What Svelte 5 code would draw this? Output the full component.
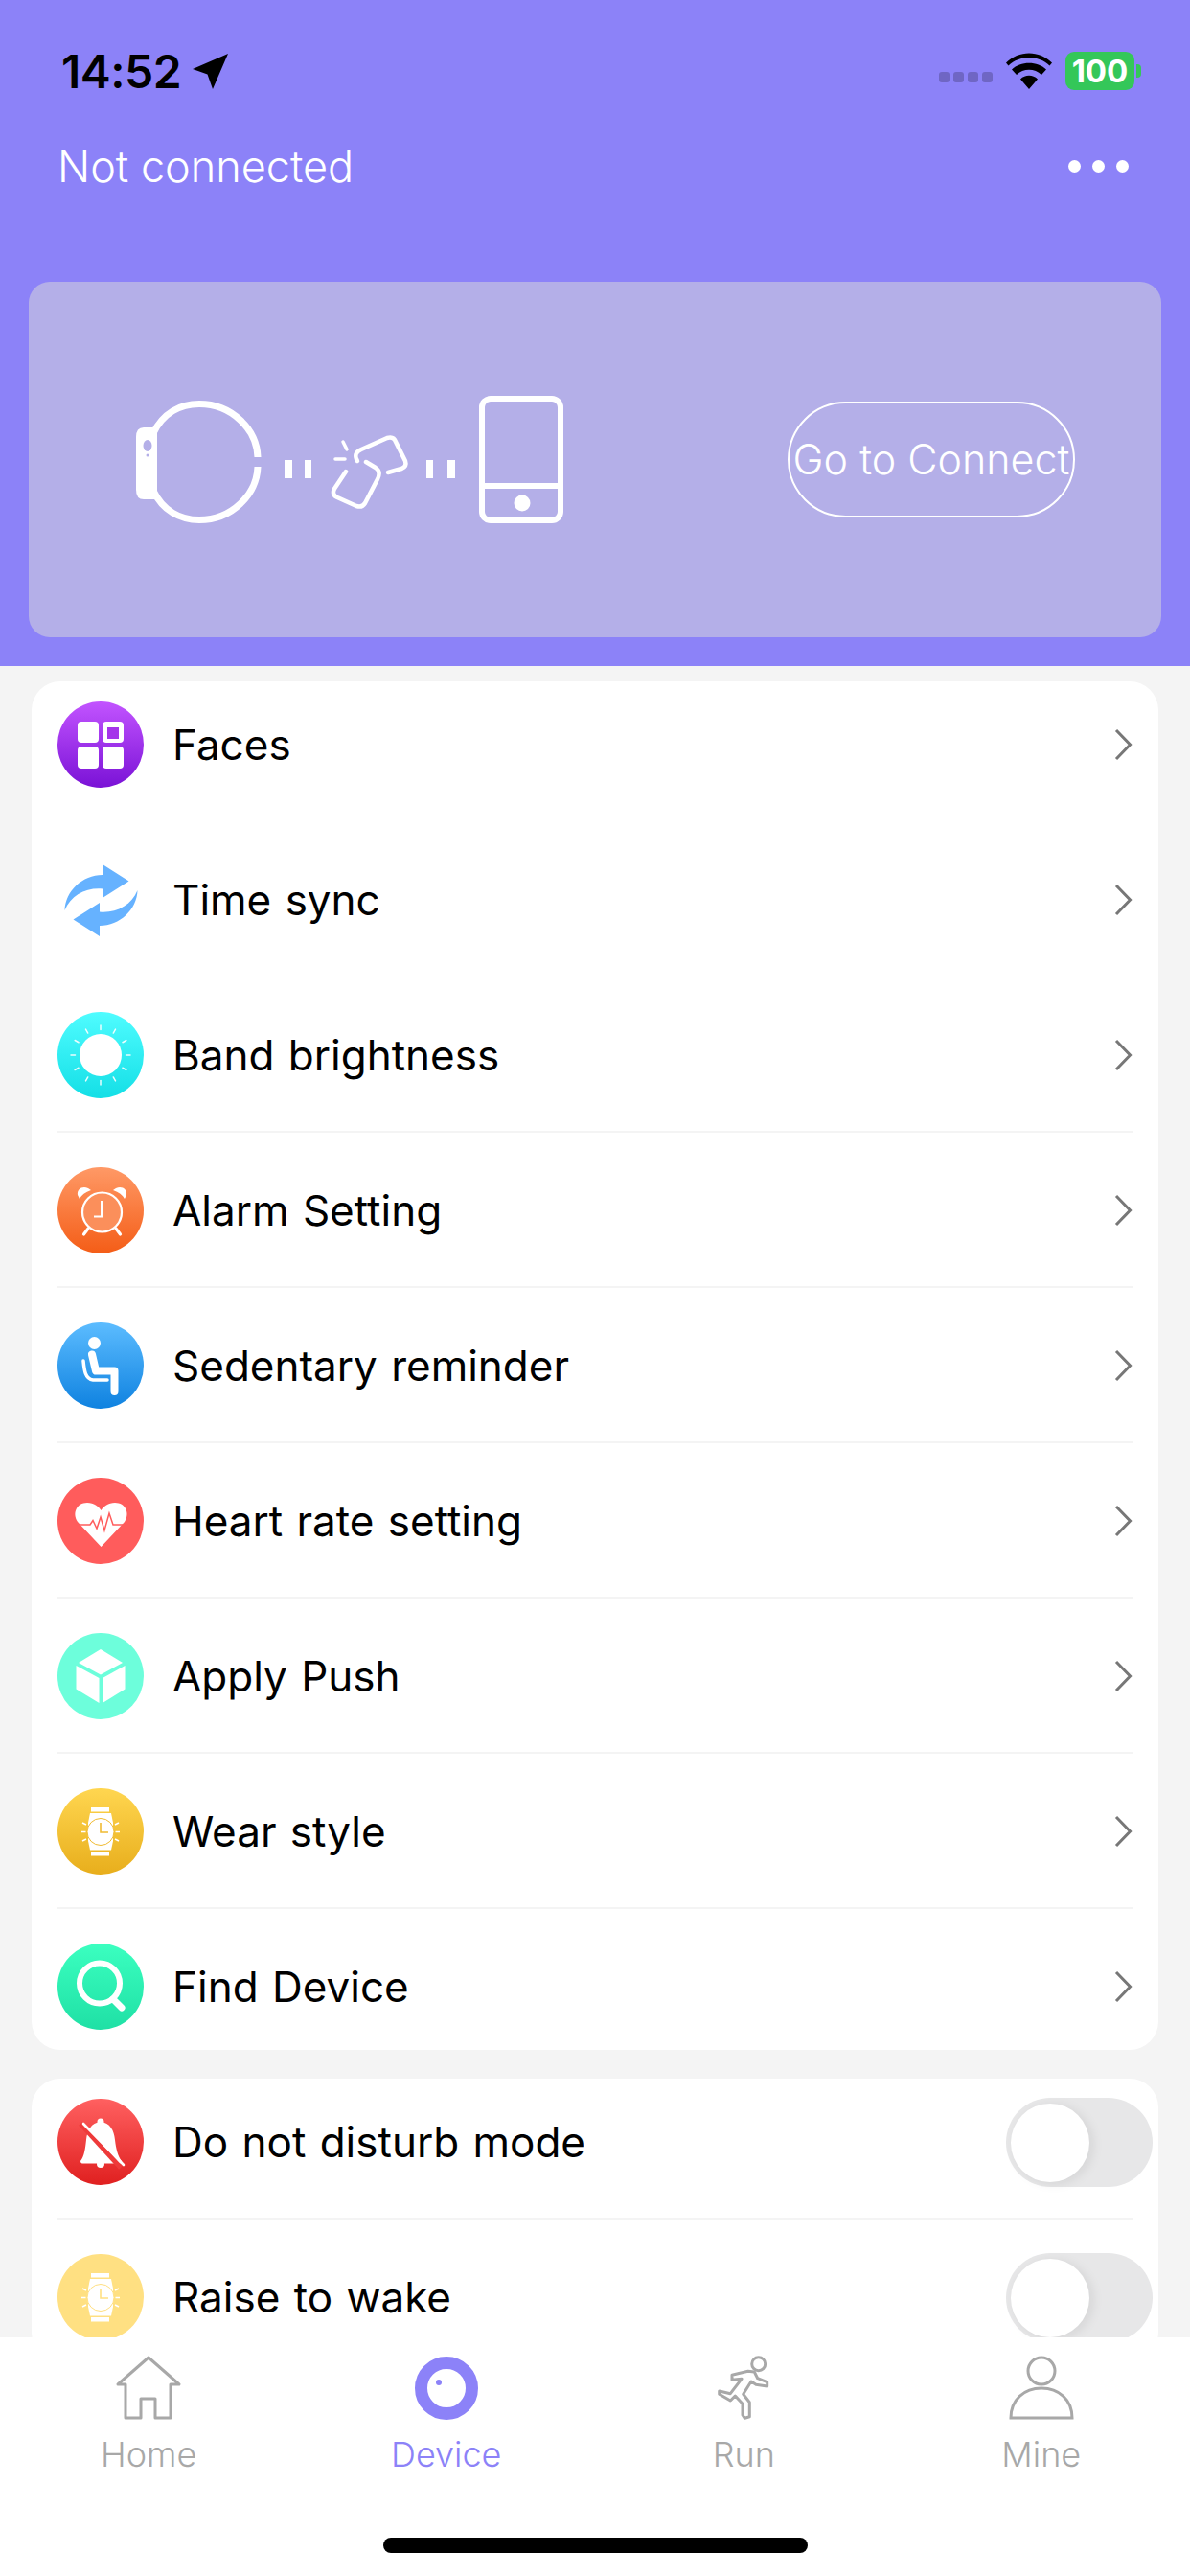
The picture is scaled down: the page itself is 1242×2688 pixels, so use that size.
<script>
  const mainRows = [
    { label: "Faces", icon: "faces", line: false },
    { label: "Time sync", icon: "sync", line: false },
    { label: "Band brightness", icon: "sun", line: false },
    { label: "Alarm Setting", icon: "alarm", line: true },
    { label: "Sedentary reminder", icon: "seat", line: true },
    { label: "Heart rate setting", icon: "heart", line: true },
    { label: "Apply Push", icon: "cube", line: true },
    { label: "Wear style", icon: "wear", line: true },
    { label: "Find Device", icon: "find", line: true },
  ];

  const switchRows = [
    { label: "Do not disturb mode", icon: "bell", line: false },
    { label: "Raise to wake", icon: "raise", line: true },
  ];

  const tabs = [
    { label: "Home", icon: "home" },
    { label: "Device", icon: "device", active: true },
    { label: "Run", icon: "run" },
    { label: "Mine", icon: "mine" },
  ];

  const rays = Array.from({ length: 12 }, (_, i) => i * 30);
</script>

{#snippet watch(color)}
  <rect x="35" y="20" width="19" height="4.5" fill="#fff" />
  <rect x="35" y="66" width="19" height="4.5" fill="#fff" />
  <path d="M34 26H56L58 36V55L56 64.500H34L32 55V36Z" fill="#fff" />
  <circle cx="45" cy="45.500" r="14" fill="#fff" stroke={color} stroke-width="1" />
  <path d="M45 36V46H53" fill="none" stroke={color} stroke-width="1.600" />
  <path d="M26 36L30 38M25 45.500H29.500M26 55L30 53M64 36L60 38M65 45.500H60.500M64 55L60 53" stroke="#fff" stroke-width="1.600" />
{/snippet}

{#snippet glyph(name)}
  <svg viewBox="0 0 90 90" width="90" height="90">
    {#if name === "faces"}
      <rect x="21" y="21" width="22" height="22" rx="4" fill="#fff" />
      <rect x="47" y="21" width="22" height="22" rx="4" fill="#fff" />
      <rect x="52" y="27" width="12" height="12" fill="#a534ea" />
      <rect x="21" y="47" width="22" height="23" rx="4" fill="#fff" />
      <rect x="47" y="47" width="22" height="23" rx="4" fill="#fff" />
    {:else if name === "sync"}
      <path d="M47 8L74.500 25.500L47 43V33.500C30 32 14 40 7.500 56C8 36 26 19 47 19Z" fill="#66b2ff" />
      <path d="M47 8L74.500 25.500L47 43V33.500C30 32 14 40 7.500 56C8 36 26 19 47 19Z" fill="#66b2ff" transform="rotate(180 45.500 45.500)" />
    {:else if name === "sun"}
      <circle cx="45" cy="45" r="22" fill="#fff" />
      {#each rays as deg}
        <path d="M45 14V18.500" stroke="#fff" stroke-width="1.500" stroke-linecap="round" opacity="0.9" transform="rotate({deg} 45 45)" />
      {/each}
    {:else if name === "alarm"}
      <path d="M21 29C20 23 26 19 32 22L35 24C29 26 25 29 23 33Z" fill="#fff" />
      <path d="M72 29C73 23 67 19 61 22L58 24C64 26 68 29 70 33Z" fill="#fff" />
      <circle cx="46.500" cy="47" r="20.500" fill="#fb8f5b" stroke="#fff" stroke-width="2.200" />
      <path d="M46 35V51.500H38" fill="none" stroke="#fff" stroke-width="2" />
      <path d="M32 64L27.500 70M61 64L65.500 70" stroke="#fff" stroke-width="3.200" stroke-linecap="round" />
    {:else if name === "seat"}
      <circle cx="38.500" cy="21.500" r="6.500" fill="#fff" />
      <path d="M36 33.500L40 50.500H59.500V72" fill="none" stroke="#fff" stroke-width="8" stroke-linecap="round" stroke-linejoin="round" />
      <path d="M27 40C28 50 29 59 37 60H52" fill="none" stroke="#fff" stroke-width="3.500" stroke-linecap="round" />
    {:else if name === "heart"}
      <path d="M45.500 72L21 46C15 37 20 26 31 26C38 26 43 30 45.500 34C48 30 53 26 60 26C71 26 76 37 70 46Z" fill="#fff" />
      <path d="M19 49H34L37 44.500L41 53L45 41L49 55L54 37L58 49H72" fill="none" stroke="#ff5c5c" stroke-width="1.500" />
    {:else if name === "cube"}
      <path d="M45 17L68 31L45 43.500L22 31Z" fill="#fff" />
      <path d="M19.500 34L43.500 47V73L19.500 58.500Z" fill="#fff" />
      <path d="M70.500 34L47 47V73L70.500 58.500Z" fill="#fff" />
    {:else if name === "wear"}
      {@render watch("#f0bb32")}
    {:else if name === "raise"}
      {@render watch("#ffe082")}
    {:else if name === "find"}
      <circle cx="44" cy="41.500" r="21" fill="none" stroke="#fff" stroke-width="6" />
      <path d="M58 58L67 67" stroke="#fff" stroke-width="7" stroke-linecap="round" />
    {:else if name === "bell"}
      <circle cx="45" cy="24" r="3.500" fill="#fff" />
      <path d="M45 24C35 25 31 33 30 43C29 52 28 60 24 65C24 67 25 67.500 27 67.500H65C67 67.500 68 67 67 65C63 60 61 52 60 43C59 33 55 25 45 24Z" fill="#fff" />
      <circle cx="45" cy="68" r="4" fill="#fff" />
      <path d="M24 26L66 72" stroke="#ee3a3a" stroke-width="5" />
      <path d="M27 26L69 69" stroke="#fff" stroke-width="2.600" stroke-linecap="round" />
    {/if}
  </svg>
{/snippet}

{#snippet chevron()}
  <svg class="chevron" viewBox="0 0 22 36" width="22" height="36">
    <path d="M5 3L19.500 18L5 33" fill="none" stroke="#777" stroke-width="3" />
  </svg>
{/snippet}

{#snippet tabIcon(name)}
  <svg viewBox="0 0 70 68" width="70" height="68">
    {#if name === "home"}
      <path d="M35 2L67 30H58V65H42V45H27V65H11V30H3Z" fill="none" stroke="#a8a8a8" stroke-width="3" stroke-linejoin="round" />
    {:else if name === "device"}
      <circle cx="35" cy="34" r="26.500" fill="none" stroke="#8c82f8" stroke-width="13" />
      <circle cx="27" cy="28" r="3" fill="#8c82f8" />
    {:else if name === "run"}
      <circle cx="50.700" cy="8.700" r="7" fill="none" stroke="#a8a8a8" stroke-width="3" />
      <path d="M23 20.300L39.700 16.300L46.300 17L49.700 23.700L59.700 27.700V32L48 30.300L43 27L34.700 40.300L41.300 48.700V63.700L36.300 65.300L34 62V50.300L26.300 42L21.300 47L9.700 40.300V37L21.300 39.700L33 24.300L23 25.300Z" fill="none" stroke="#a8a8a8" stroke-width="3" stroke-linejoin="round" />
    {:else if name === "mine"}
      <circle cx="35" cy="16" r="14" fill="none" stroke="#a8a8a8" stroke-width="3" />
      <path d="M3 65C3 46 17 34 35 34C53 34 67 46 67 65Z" fill="none" stroke="#a8a8a8" stroke-width="3" />
    {/if}
  </svg>
{/snippet}

<div class="page">
  <header class="top">
    <div class="status">
      <div class="clock">
        <span>14:52</span>
        <svg viewBox="0 0 38 38" width="38" height="38">
          <path d="M37 1L21 38L15.500 22.500L0 17Z" fill="#000" />
        </svg>
      </div>
      <div class="indicators">
        <span class="signal"><i></i><i></i><i></i><i></i></span>
        <svg viewBox="0 0 48 38" width="48" height="38">
          <path d="M24 38L15 27.500C20 22.500 28 22.500 33 27.500ZM11 23L6 17.500C15 8.500 33 8.500 42 17.500L37 23C30 16 18 16 11 23ZM2.500 13.500L0 10.500C13 -3 35 -3 48 10.500L45.500 13.500C34 2 14 2 2.500 13.500Z" fill="#000" />
        </svg>
        <span class="battery">100</span>
      </div>
    </div>

    <div class="title-row">
      <span>Not connected</span>
      <span class="more"><i></i><i></i><i></i></span>
    </div>

    <section class="connect">
      <svg class="pairing" viewBox="0 0 450 136" width="450" height="136">
        <!-- watch -->
        <path d="M18 40C28 19 46 9.500 66 9.500C100 9.500 126 36 127 65M127 75C126 104 100 130.500 66 130.500C46 130.500 28 121 18 100" fill="none" stroke="#fff" stroke-width="7" />
        <path d="M8 34H22V109H8Q0 109 0 99V44Q0 34 8 34Z" fill="#fff" />
        <ellipse cx="12" cy="53" rx="4.500" ry="6" fill="#b4afe8" />
        <circle cx="12" cy="63" r="1.500" fill="#b4afe8" />
        <!-- link dashes -->
        <rect x="155" y="68" width="8" height="19" fill="#fff" />
        <rect x="176" y="68" width="7" height="19" fill="#fff" />
        <rect x="303" y="68" width="7" height="19" fill="#fff" />
        <rect x="325" y="68" width="8" height="19" fill="#fff" />
        <!-- broken link -->
        <g fill="none" stroke="#fff" stroke-width="4.500" stroke-linecap="round" stroke-linejoin="round">
          <path d="M219 80L207 98Q204 104 210 107L230 116Q236 118 239 113L252 88Q256 80 250 76L240 70" />
          <path d="M231 69Q226 61 235 57L262 45Q269 43 271 49L281 69Q283 75 277 77L263 81" />
          <path d="M216 49L220 57M208 67H218" stroke-width="3.500" />
        </g>
        <!-- phone -->
        <rect x="361" y="4" width="82" height="127" rx="9" fill="none" stroke="#fff" stroke-width="6" />
        <path d="M361 95H443" stroke="#fff" stroke-width="6" />
        <circle cx="403" cy="113" r="8.500" fill="#fff" />
      </svg>
      <div class="connect-btn">Go to Connect</div>
    </section>
  </header>

  <main class="content">
    <div class="panel">
      {#each mainRows as row}
        <div class="row" class:line={row.line}>
          <span class="badge {row.icon}">{@render glyph(row.icon)}</span>
          <span class="label">{row.label}</span>
          {@render chevron()}
        </div>
      {/each}
    </div>

    <div class="panel">
      {#each switchRows as row}
        <div class="row" class:line={row.line}>
          <span class="badge {row.icon}">{@render glyph(row.icon)}</span>
          <span class="label">{row.label}</span>
          <span class="toggle"><i></i></span>
        </div>
      {/each}
    </div>
  </main>

  <nav class="tabbar">
    <div class="tabs">
      {#each tabs as tab}
        <div class="tab" class:active={tab.active}>
          {@render tabIcon(tab.icon)}
          <span>{tab.label}</span>
        </div>
      {/each}
    </div>
    <div class="home-bar"></div>
  </nav>
</div>

<style>
  :global(body) {
    margin: 0;
    background: #f4f4f4;
  }
  .page {
    width: 1242px;
    height: 2688px;
    display: flex;
    flex-direction: column;
    overflow: hidden;
    font-family: Inter, "Noto Sans", sans-serif;
    background: #f4f4f4;
  }
  .top {
    height: 695px;
    flex: none;
    box-sizing: border-box;
    background: #8c82f8;
    padding-top: 50px;
  }
  .status {
    height: 48px;
    display: flex;
    justify-content: space-between;
    align-items: center;
    padding: 0 58px 0 64px;
  }
  .clock {
    display: flex;
    align-items: center;
    gap: 12px;
    font-size: 48px;
    font-weight: 600;
    color: #000;
    letter-spacing: -0.5px;
  }
  .indicators {
    display: flex;
    align-items: center;
  }
  .signal {
    display: flex;
    gap: 4px;
    margin: 12px 14px 0 0;
  }
  .signal i {
    width: 11px;
    height: 11px;
    border-radius: 3px;
    background: #6f66c4;
  }
  .battery {
    position: relative;
    width: 72px;
    height: 40px;
    margin-left: 14px;
    border-radius: 9px;
    background: #34c759;
    color: #fff;
    font-size: 33px;
    font-weight: 700;
    line-height: 40px;
    text-align: center;
  }
  .battery::after {
    content: "";
    position: absolute;
    right: -7px;
    top: 13px;
    width: 5px;
    height: 14px;
    border-radius: 0 4px 4px 0;
    background: #34c759;
  }
  .title-row {
    display: flex;
    justify-content: space-between;
    align-items: center;
    height: 60px;
    margin-top: 45px;
    padding: 0 64px 0 60px;
    color: #fff;
    font-size: 45px;
    font-weight: 300;
  }
  .more {
    display: flex;
    gap: 12px;
  }
  .more i {
    width: 13px;
    height: 13px;
    border-radius: 50%;
    background: #fff;
  }
  .connect {
    margin: 91px 30px 0;
    height: 371px;
    border-radius: 22px;
    background: #b4afe8;
    display: flex;
    align-items: center;
    justify-content: space-between;
    padding: 0 90px 0 112px;
    box-sizing: border-box;
  }
  .pairing {
    flex: none;
    overflow: visible;
  }
  .connect-btn {
    width: 300px;
    height: 121px;
    box-sizing: border-box;
    border: 2px solid #fff;
    border-radius: 61px;
    color: #fff;
    font-size: 43px;
    font-weight: 300;
    line-height: 117px;
    text-align: center;
    white-space: nowrap;
  }
  .content {
    flex: 1;
    min-height: 0;
    overflow: hidden;
    padding: 16px 33px 0;
    display: flex;
    flex-direction: column;
    gap: 30px;
  }
  .panel {
    background: #fff;
    border-radius: 30px;
    flex: none;
  }
  .row {
    display: flex;
    align-items: center;
    height: 90px;
    padding: 37px 27px 35px;
    position: relative;
  }
  .row:first-child {
    padding-top: 21px;
  }
  .row:last-child {
    padding-bottom: 21px;
  }
  .row.line::before {
    content: "";
    position: absolute;
    left: 27px;
    right: 27px;
    top: -1px;
    height: 2px;
    background: #f4f4f4;
  }
  .badge {
    flex: none;
    width: 90px;
    height: 90px;
    border-radius: 50%;
  }
  .badge svg {
    display: block;
  }
  .faces { background: linear-gradient(#c254ff, #7a12d6); }
  .sun { background: linear-gradient(#4ffcff, #14dfe6); }
  .alarm { background: linear-gradient(#ff9966, #f45d17); }
  .seat { background: linear-gradient(#5cbcff, #0f82e0); }
  .heart { background: #ff5c5c; }
  .cube { background: #6dfedb; }
  .wear { background: linear-gradient(#ffd650, #e8ae1c); }
  .find { background: linear-gradient(#3bffc0, #1fe0a5); }
  .bell { background: linear-gradient(#ff6060, #e02020); }
  .raise { background: #ffe082; }
  .label {
    flex: 1;
    margin-left: 30px;
    font-size: 44px;
    color: #000;
    word-spacing: 2px;
  }
  .chevron {
    flex: none;
  }
  .toggle {
    flex: none;
    position: relative;
    width: 153px;
    height: 93px;
    margin-right: -21px;
    border-radius: 47px;
    background: #e7e7e8;
  }
  .toggle i {
    position: absolute;
    left: 5px;
    top: 6px;
    width: 82px;
    height: 82px;
    border-radius: 50%;
    background: #fff;
    box-shadow: 4px 2px 12px rgba(0, 0, 0, 0.08);
  }
  .tabbar {
    flex: none;
    height: 249px;
    box-sizing: border-box;
    background: #fff;
    padding-top: 19px;
    position: relative;
  }
  .tabs {
    display: grid;
    grid-template-columns: repeat(4, 1fr);
  }
  .tab {
    display: flex;
    flex-direction: column;
    align-items: center;
    gap: 13px;
    color: #a8a8a8;
    font-size: 36px;
    font-weight: 300;
  }
  .tab.active {
    color: #8c82f8;
  }
  .home-bar {
    position: absolute;
    left: 400px;
    bottom: 24px;
    width: 443px;
    height: 16px;
    border-radius: 8px;
    background: #000;
  }
</style>
